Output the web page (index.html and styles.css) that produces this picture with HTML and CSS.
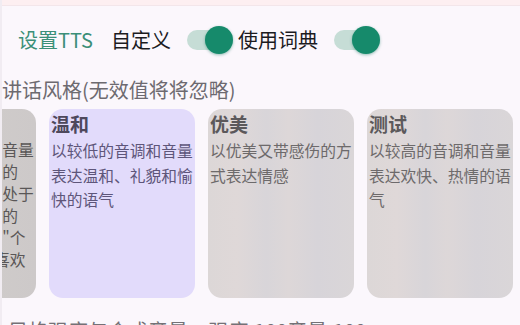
FILE: index.html
```html
<!DOCTYPE html>
<html lang="zh-CN">
<head>
<meta charset="utf-8">
<link rel="stylesheet" href="styles.css">
</head>
<body>
<div class="topband"></div>
<div class="header">
  <span class="title">设置TTS</span>
  <span class="label label-custom">自定义</span>
  <span class="switch"><span class="track"></span><span class="thumb"></span></span>
  <span class="label label-dict">使用词典</span>
  <span class="switch"><span class="track"></span><span class="thumb"></span></span>
</div>
<div class="section">讲话风格(无效值将将忽略)</div>
<div class="cards">
  <div class="card card-grey-dark">
    <div class="card-title">亲切</div>
    <div class="card-desc">以较低的音调和音量<br>表达平和而稳重的<br>语气，像人们身处于<br>放松状态时说话的<br>样子，适合作为"个<br>性化"的用户所喜欢</div>
  </div>
  <div class="card card-active">
    <div class="card-title">温和</div>
    <div class="card-desc">以较低的音调和音量表达温和、礼貌和愉快的语气</div>
  </div>
  <div class="card card-grey">
    <div class="card-title">优美</div>
    <div class="card-desc">以优美又带感伤的方式表达情感</div>
  </div>
  <div class="card card-grey">
    <div class="card-title">测试</div>
    <div class="card-desc">以较高的音调和音量表达欢快、热情的语气</div>
  </div>
</div>
<div class="footer">
  <span class="foot-label">风格强度与合成音量</span>
  <span class="foot-value">强度:100音量:100</span>
</div>
</body>
</html>
```
FILE: styles.css
```css
html, body {
  margin: 0;
  padding: 0;
}
body {
  width: 520px;
  height: 325px;
  overflow: hidden;
  background: #fbf7fc;
  font-family: "Noto Sans CJK SC", "Noto Sans", sans-serif;
  border-left: 2px solid #f1ecf2;
  box-sizing: border-box;
}
.topband {
  height: 5px;
  background: #fdeff1;
  border-bottom: 1px solid #f3e6ea;
}
.header {
  display: flex;
  align-items: center;
  height: 40px;
  margin-top: 14px;
  padding-left: 16px;
  font-size: 20px;
  line-height: 1;
}
.title {
  color: #3b8f78;
}
.label {
  color: #1c1b1f;
}
.label-custom {
  margin-left: 18px;
}
.label-dict {
  margin-left: 5px;
}
.switch {
  position: relative;
  display: inline-block;
  width: 46px;
  height: 28px;
  margin-left: 16px;
}
.track {
  position: absolute;
  left: 0;
  top: 4px;
  width: 40px;
  height: 20px;
  border-radius: 10px;
  background: #c6ddd6;
}
.thumb {
  position: absolute;
  right: 0;
  top: 0;
  width: 28px;
  height: 28px;
  border-radius: 50%;
  background: #168a6b;
  box-shadow: 0 1px 3px rgba(20, 120, 95, 0.45);
}
.section {
  margin-top: 16px;
  font-size: 20px;
  line-height: 28px;
  color: #6d6a70;
}
.cards {
  display: flex;
  gap: 13px;
  margin-top: 5px;
  margin-left: -112px;
  height: 189px;
}
.card {
  flex: 0 0 146px;
  height: 189px;
  border-radius: 14px;
  box-sizing: border-box;
  padding: 2px 2px 0 2px;
  overflow: hidden;
}
.card-title {
  font-size: 19px;
  font-weight: bold;
  line-height: 25px;
}
.card-desc {
  margin-top: 3px;
  font-size: 15.75px;
  line-height: 24.5px;
}
.card-active {
  background: #e2dbfb;
  color: #5e567a;
}
.card-active .card-title {
  color: #4e485c;
}
.card-grey {
  background: linear-gradient(to right, #dcd7d7 0%, #dfd8d8 20%, #d8d5d9 40%, #ddd7d8 55%, #d7d4d9 75%, #dad6d8 100%);
  color: #6d6a6b;
}
.card-grey .card-title {
  color: #5c595b;
}
.card-grey-dark {
  background: linear-gradient(to right, #d2cecd 0%, #cfcbca 70%, #cdc9c9 100%);
  color: #5a5757;
}
.card-grey-dark .card-desc {
  line-height: 22px;
  margin-right: -10px;
}
.footer {
  margin-top: 19px;
  padding-left: 6px;
  font-size: 20px;
  line-height: 28px;
  color: #747176;
  white-space: nowrap;
}
.foot-value {
  margin-left: 16px;
}
```
